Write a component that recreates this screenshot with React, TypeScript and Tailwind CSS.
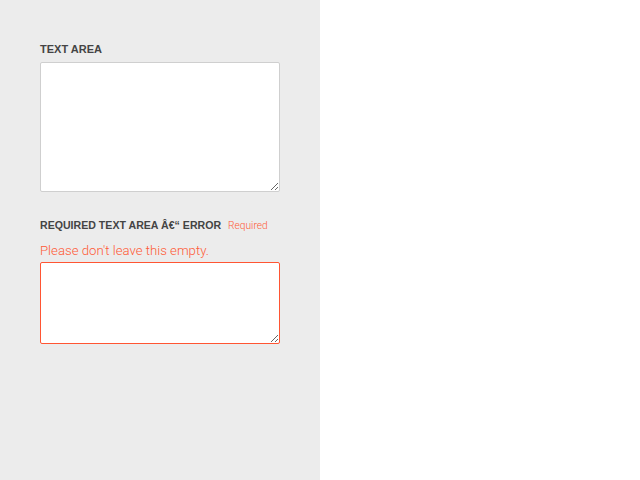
import React from "react";

export default function App() {
  return (
    <div className="flex h-[480px] w-[640px] bg-white" style={{ fontFamily: '"Liberation Sans", Arial, sans-serif' }}>
      <div className="flex w-[320px] flex-col bg-[#ececec] px-[40px] pt-[43px]">
        <label className="mb-[7px] block text-[11px] font-bold leading-[12px] text-[#444]">TEXT AREA</label>
        <textarea className="block h-[130px] w-[240px] rounded-[2px] border border-[#cfcfcf] bg-white outline-none" />
        <div className="mt-[27px] flex items-baseline">
          <label className="text-[10.6px] font-bold leading-[12px] text-[#444]">REQUIRED TEXT AREA Â€“ ERROR</label>
          <span className="ml-[7px] text-[10.2px] leading-[12px] text-[#ff5a36]" style={{ fontFamily: 'Roboto, sans-serif', fontWeight: 300 }}>Required</span>
        </div>
        <div className="mt-[10px] text-[13.2px] leading-[17px] text-[#ff5a36]" style={{ fontFamily: 'Roboto, sans-serif', fontWeight: 300 }}>Please don't leave this empty.</div>
        <textarea className="mt-[3px] block h-[82px] w-[240px] rounded-[2px] border border-[#ff5533] bg-white outline-none" />
      </div>
      <div className="flex-1" />
    </div>
  );
}
